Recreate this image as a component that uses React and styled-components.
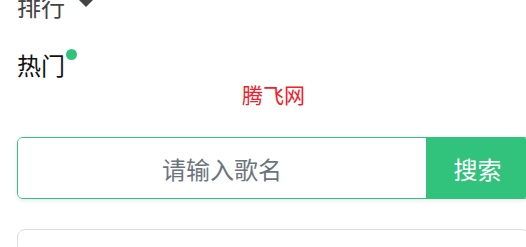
import styled, { createGlobalStyle } from 'styled-components';

const Global = createGlobalStyle`
  html, body { margin: 0; padding: 0; background: #fff; overflow: hidden; }
  body { font-family: "Noto Sans CJK SC", "Noto Sans", sans-serif; }
`;

const Page = styled.div`
  width: 530px;
  padding: 0 0 0 17px;
  box-sizing: border-box;
  margin-top: -11px;
`;

const Dropdown = styled.div`
  display: flex;
  align-items: center;
  font-size: 24px;
  line-height: 34px;
  color: #444;
`;

const Caret = styled.span`
  display: inline-block;
  margin-left: 14px;
  margin-top: -6px;
  width: 0;
  height: 0;
  border-left: 7px solid transparent;
  border-right: 7px solid transparent;
  border-top: 7px solid #444;
`;

const Tab = styled.div`
  position: relative;
  display: inline-block;
  margin-top: 25px;
  font-size: 24px;
  line-height: 34px;
  color: #111;
`;

const Dot = styled.span`
  position: absolute;
  top: 1px;
  right: -12px;
  width: 11px;
  height: 11px;
  border-radius: 50%;
  background: #31c27c;
`;

const Brand = styled.div`
  text-align: center;
  font-size: 21px;
  line-height: 28px;
  color: #f0202a;
  margin-top: -2px;
`;

const SearchBar = styled.form`
  display: flex;
  margin-top: 29px;
  height: 62px;
  border: 1px solid #31c27c;
  border-radius: 6px;
  overflow: hidden;
  box-sizing: border-box;
  box-shadow: 0 2px 4px rgba(0, 0, 0, 0.08);
`;

const Input = styled.input`
  flex: 1;
  min-width: 0;
  border: none;
  outline: none;
  text-align: center;
  font-family: inherit;
  font-size: 24px;
  color: #333;
  &::placeholder { color: #6c757d; }
`;

const Button = styled.button`
  width: 103px;
  border: none;
  background: #31c27c;
  color: #fff;
  font-family: inherit;
  font-size: 24px;
  padding: 0;
`;

const Card = styled.div`
  margin-top: 30px;
  height: 60px;
  border: 1px solid #ddd;
  border-radius: 8px;
`;

export default function App() {
  return (
    <>
      <Global />
      <Page>
        <Dropdown>
          排行
          <Caret />
        </Dropdown>
        <Tab>
          热门
          <Dot />
        </Tab>
        <Brand>腾飞网</Brand>
        <SearchBar onSubmit={(e) => e.preventDefault()}>
          <Input type="text" placeholder="请输入歌名" />
          <Button type="submit">搜索</Button>
        </SearchBar>
        <Card />
      </Page>
    </>
  );
}
